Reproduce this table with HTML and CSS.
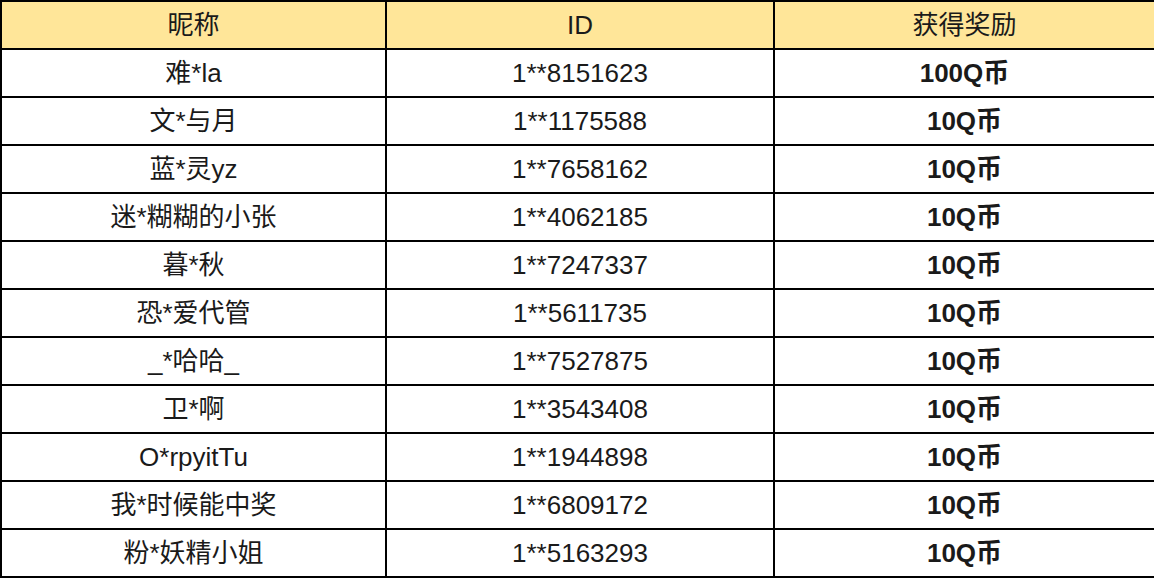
FILE: index.html
```html
<!DOCTYPE html>
<html lang="zh">
<head>
<meta charset="utf-8">
<link rel="stylesheet" href="styles.css">
</head>
<body>
<table class="prize-table">
  <colgroup>
    <col class="col-name">
    <col class="col-id">
    <col class="col-reward">
  </colgroup>
  <thead>
    <tr><th>昵称</th><th>ID</th><th>获得奖励</th></tr>
  </thead>
  <tbody>
    <tr><td>难*la</td><td>1**8151623</td><td class="reward">100Q币</td></tr>
    <tr><td>文*与月</td><td>1**1175588</td><td class="reward">10Q币</td></tr>
    <tr><td>蓝*灵yz</td><td>1**7658162</td><td class="reward">10Q币</td></tr>
    <tr><td>迷*糊糊的小张</td><td>1**4062185</td><td class="reward">10Q币</td></tr>
    <tr><td>暮*秋</td><td>1**7247337</td><td class="reward">10Q币</td></tr>
    <tr><td>恐*爱代管</td><td>1**5611735</td><td class="reward">10Q币</td></tr>
    <tr><td>_*哈哈_</td><td>1**7527875</td><td class="reward">10Q币</td></tr>
    <tr><td>卫*啊</td><td>1**3543408</td><td class="reward">10Q币</td></tr>
    <tr><td>O*rpyitTu</td><td>1**1944898</td><td class="reward">10Q币</td></tr>
    <tr><td>我*时候能中奖</td><td>1**6809172</td><td class="reward">10Q币</td></tr>
    <tr><td>粉*妖精小姐</td><td>1**5163293</td><td class="reward">10Q币</td></tr>
  </tbody>
</table>
</body>
</html>
```

FILE: styles.css
```css
html, body {
  margin: 0;
  padding: 0;
  background: #ffffff;
}

.prize-table {
  width: 1154px;
  border-collapse: collapse;
  table-layout: fixed;
  font-family: "Liberation Sans", "Noto Sans CJK SC", sans-serif;
  font-size: 26px;
  color: #1a1a1a;
}

.col-name { width: 385px; }
.col-id { width: 388px; }
.col-reward { width: 381px; }

.prize-table th,
.prize-table td {
  border: 2px solid #000;
  height: 46px;
  padding: 0;
  text-align: center;
  vertical-align: middle;
  line-height: 30px;
}

.prize-table th {
  background: #ffe699;
  font-weight: normal;
}

.prize-table .reward {
  font-weight: bold;
}
```
